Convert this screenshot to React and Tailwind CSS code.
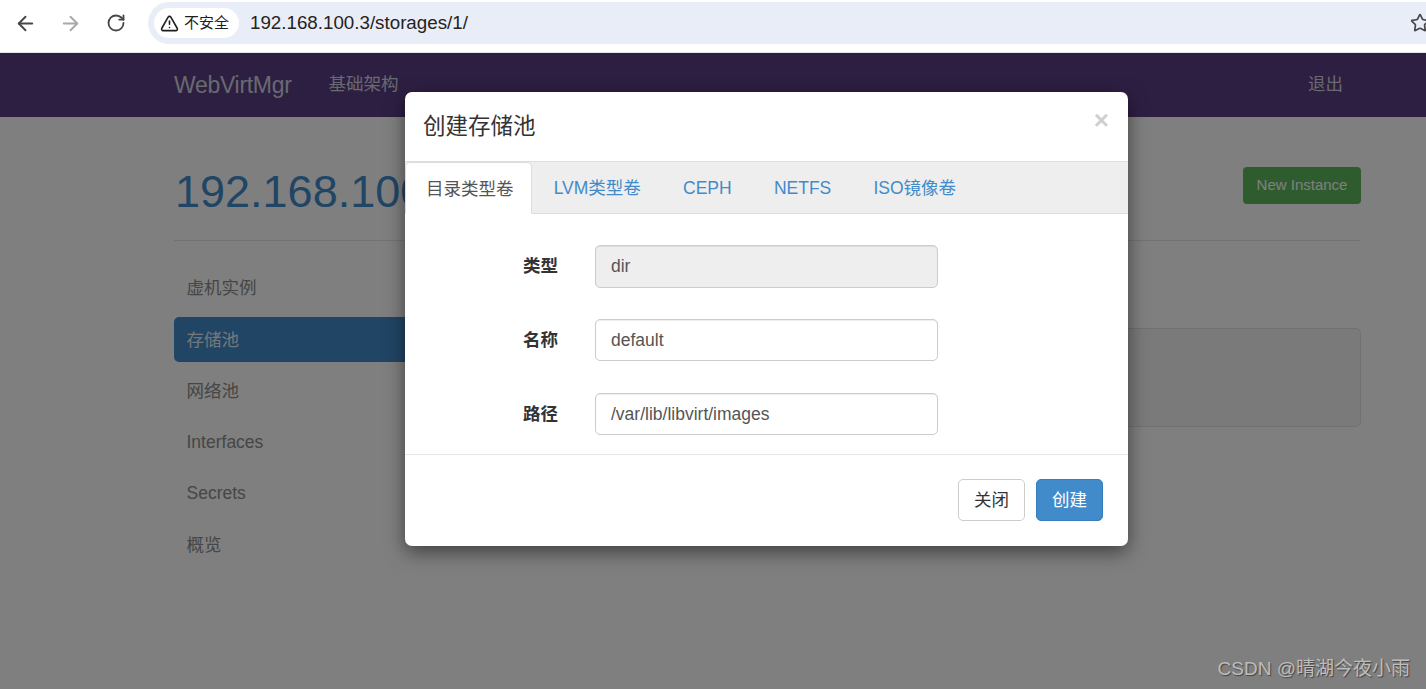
import { ArrowLeft, ArrowRight, RotateCw, Star, TriangleAlert } from 'lucide-react';

const FONT = "font-['Liberation_Sans','Noto_Sans_CJK_SC',sans-serif]";

const sideItems = [
  { label: '虚机实例' },
  { label: '存储池', active: true },
  { label: '网络池' },
  { label: 'Interfaces' },
  { label: 'Secrets' },
  { label: '概览' },
];

const tabs = ['LVM类型卷', 'CEPH', 'NETFS', 'ISO镜像卷'];

const fields = [
  { label: '类型', value: 'dir', disabled: true },
  { label: '名称', value: 'default' },
  { label: '路径', value: '/var/lib/libvirt/images' },
];

function BrowserBar() {
  return (
    <div className="h-[53px] bg-white border-b border-[#e4e4e4] flex items-start pt-[2px] overflow-hidden">
      <div className="flex items-center h-[42px] pl-[14px] w-[148px] shrink-0">
        <ArrowLeft className="w-[23px] h-[23px] text-[#474747]" strokeWidth={2} />
        <ArrowRight className="w-[23px] h-[23px] text-[#a8a8a8] ml-[22px]" strokeWidth={2} />
        <RotateCw className="w-[20px] h-[20px] text-[#474747] ml-[24px]" strokeWidth={2.2} />
      </div>
      <div className="flex-1 h-[42px] bg-[#e9edf7] rounded-l-[21px] flex items-center pl-[6px] relative">
        <div className="h-[30px] w-[85px] bg-white rounded-[15px] flex items-center pl-[6px] gap-[5px] text-[15px] text-[#1f1f1f]">
          <TriangleAlert className="w-[19px] h-[19px] text-[#1f1f1f]" strokeWidth={2} />
          <span>不安全</span>
        </div>
        <span className="ml-[11px] text-[18.75px] text-[#26221c]">192.168.100.3/storages/1/</span>
        <Star className="absolute left-[1262px] top-[11px] w-[20px] h-[20px] text-[#474747]" strokeWidth={2} />
      </div>
    </div>
  );
}

function TopNav() {
  return (
    <div className="h-[64px] bg-[#5a3f84] pl-[174px] pr-[83px] flex items-center text-[#d2d2e0]">
      <span className="text-[23px] tracking-[-0.3px]">WebVirtMgr</span>
      <span className="ml-[37px] -mt-[2px] text-[17.5px]">基础架构</span>
      <span className="ml-auto -mt-[2px] text-[17.5px]">退出</span>
    </div>
  );
}

function PageBody() {
  return (
    <div className="pl-[174px] pr-[65px] bg-white">
      <div className="h-[124px] border-b border-[#e6e6e6] flex items-start justify-between">
        <h1 className="mt-[49px] pl-[1px] text-[45px] leading-[52px] text-[#428bca]">192.168.100.3</h1>
        <div className="mt-[50px] h-[37px] w-[118px] rounded-[4px] bg-[#5cb85c] text-white text-[15px] flex items-center justify-center">
          New Instance
        </div>
      </div>
      <div className="flex mt-[25px]">
        <div className="w-[297px] shrink-0 flex flex-col gap-[6.25px]">
          {sideItems.map(item => (
            <div
              key={item.label}
              className={item.active
                ? 'h-[45px] rounded-[5px] bg-[#428bca] text-[#e8eef4] text-[17.5px] pl-[12.5px] flex items-center'
                : 'h-[45px] text-[#8c8c8c] text-[17.5px] pl-[12.5px] flex items-center'}
            >
              {item.label}
            </div>
          ))}
        </div>
        <div className="flex-1 ml-[32px] mt-[62px] h-[99px] bg-[#f5f5f5] border border-[#e3e3e3] rounded-[5px]" />
      </div>
    </div>
  );
}

function Modal() {
  return (
    <div className="absolute left-[405px] top-[39px] w-[723px] h-[454px] bg-white rounded-[7px] shadow-[0_6px_19px_rgba(0,0,0,0.5)] flex flex-col overflow-hidden">
      <div className="h-[69px] shrink-0 pl-[19px] pr-[19px] flex items-center justify-between">
        <h4 className="text-[22.5px] -ml-[1px] text-[#333]">创建存储池</h4>
        <span className="text-[26px] font-bold text-[#cfcfcf] -mt-[13px]">×</span>
      </div>
      <div className="h-[53px] shrink-0 bg-[#eee] border-y border-[#ddd] flex items-end">
        <div className="h-[52px] -mb-px bg-white border border-[#ddd] border-b-white rounded-t-[5px] pl-5 pr-[17px] pt-[2px] flex items-center text-[17.5px] text-[#555]">
          目录类型卷
        </div>
        {tabs.map(tab => (
          <div key={tab} className="h-[51px] ml-[2.2px] px-5 pt-[2px] flex items-center text-[17.5px] text-[#428bca]">
            {tab}
          </div>
        ))}
      </div>
      <div className="flex-1 pt-[31px] flex flex-col gap-[31.25px]">
        {fields.map(field => (
          <div key={field.label} className="flex items-center">
            <label className="w-[153px] text-right text-[17.5px] font-bold text-[#333]">{field.label}</label>
            <div
              className={field.disabled
                ? 'ml-[37px] w-[343px] h-[42.5px] rounded-[5px] border border-[#ccc] bg-[#eee] pl-[15px] flex items-center text-[17.5px] text-[#555] shadow-[inset_0_1px_1px_rgba(0,0,0,0.075)]'
                : 'ml-[37px] w-[343px] h-[42.5px] rounded-[5px] border border-[#ccc] bg-white pl-[15px] flex items-center text-[17.5px] text-[#555] shadow-[inset_0_1px_1px_rgba(0,0,0,0.075)]'}
            >
              {field.value}
            </div>
          </div>
        ))}
      </div>
      <div className="h-[92px] shrink-0 border-t border-[#e5e5e5] pt-[24px] pr-[25px] flex items-start justify-end gap-[11px]">
        <div className="w-[67px] h-[42px] rounded-[5px] border border-[#ccc] bg-white flex items-center justify-center text-[17.5px] text-[#333]">
          关闭
        </div>
        <div className="w-[67px] h-[42px] rounded-[5px] border border-[#357ebd] bg-[#428bca] flex items-center justify-center text-[17.5px] text-white">
          创建
        </div>
      </div>
    </div>
  );
}

export default function App() {
  return (
    <div className={`relative w-[1426px] h-[689px] overflow-hidden bg-white ${FONT}`}>
      <BrowserBar />
      <TopNav />
      <PageBody />

      {/* modal backdrop */}
      <div className="absolute left-0 right-0 top-[53px] bottom-0 bg-black/50">
        <Modal />
      </div>

      {/* CSDN watermark */}
      <span className="absolute right-[16px] bottom-[6px] text-[19px] text-[#bdbdbd] [text-shadow:1px_1px_1px_#444]">
        CSDN @晴湖今夜小雨
      </span>
    </div>
  );
}
